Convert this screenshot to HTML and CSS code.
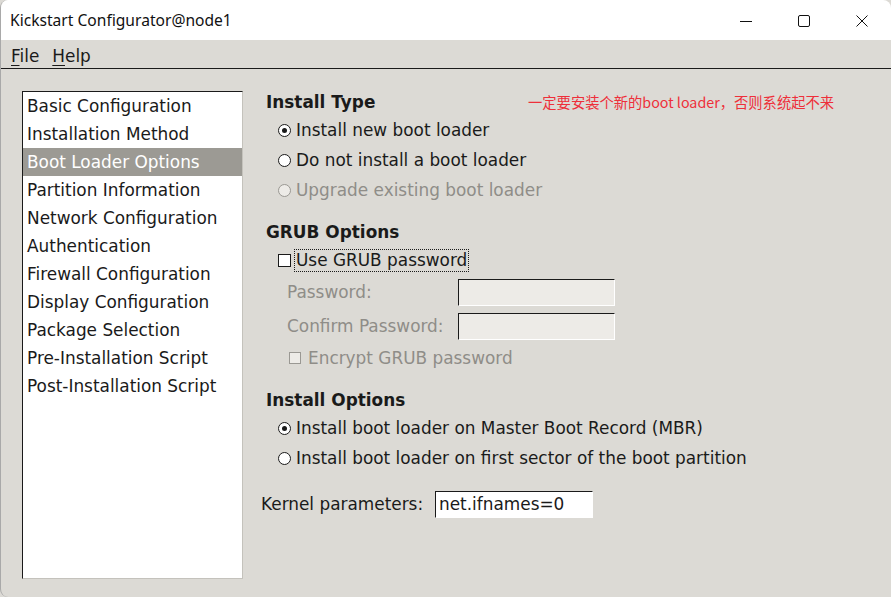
FILE: index.html
```html
<!DOCTYPE html>
<html>
<head>
<meta charset="utf-8">
<link rel="stylesheet" href="styles.css">
</head>
<body>
<div class="window">
  <div class="titlebar">
    <span class="title">Kickstart Configurator@node1</span>
    <div class="controls">
      <svg class="ctl" width="14" height="14" viewBox="0 0 14 14"><path d="M1 7.5H13" stroke="#111" stroke-width="1"/></svg>
      <svg class="ctl" width="14" height="14" viewBox="0 0 14 14"><rect x="1.5" y="1.5" width="11" height="11" rx="1.5" fill="none" stroke="#111" stroke-width="1"/></svg>
      <svg class="ctl" width="14" height="14" viewBox="0 0 14 14"><path d="M1.5 1.5L12.5 12.5M12.5 1.5L1.5 12.5" stroke="#111" stroke-width="1"/></svg>
    </div>
  </div>
  <div class="menubar">
    <span class="menu"><u>F</u>ile</span>
    <span class="menu"><u>H</u>elp</span>
  </div>
  <div class="body">
    <div class="list">
      <div class="item">Basic Configuration</div>
      <div class="item">Installation Method</div>
      <div class="item selected">Boot Loader Options</div>
      <div class="item">Partition Information</div>
      <div class="item">Network Configuration</div>
      <div class="item">Authentication</div>
      <div class="item">Firewall Configuration</div>
      <div class="item">Display Configuration</div>
      <div class="item">Package Selection</div>
      <div class="item">Pre-Installation Script</div>
      <div class="item">Post-Installation Script</div>
    </div>
    <div class="panel">
      <div class="heading first">Install Type <span class="note">一定要安装个新的boot loader，否则系统起不来</span></div>
      <div class="row opt"><span class="radio checked"></span>Install new boot loader</div>
      <div class="row opt"><span class="radio"></span>Do not install a boot loader</div>
      <div class="row opt disabled"><span class="radio dis"></span>Upgrade existing boot loader</div>

      <div class="heading grub">GRUB Options</div>
      <div class="row check"><span class="box"></span><span class="focus">Use GRUB password</span></div>
      <div class="row field disabled"><span class="flabel">Password:</span><span class="entry dis"></span></div>
      <div class="row field disabled"><span class="flabel">Confirm Password:</span><span class="entry dis"></span></div>
      <div class="row encrypt disabled"><span class="box small dis"></span>Encrypt GRUB password</div>

      <div class="heading opts">Install Options</div>
      <div class="row opt"><span class="radio checked"></span>Install boot loader on Master Boot Record (MBR)</div>
      <div class="row opt"><span class="radio"></span>Install boot loader on first sector of the boot partition</div>

      <div class="row kernel"><span class="klabel">Kernel parameters:</span><span class="entry kentry">net.ifnames=0</span></div>
    </div>
  </div>
</div>
</body>
</html>
```

FILE: styles.css
```css
html, body {
  margin: 0;
  padding: 0;
  background: #dcdad5;
}
.window {
  width: 891px;
  height: 597px;
  box-sizing: border-box;
  border-left: 1px solid #a9a9a9;
  border-radius: 8px 8px 0 8px;
  overflow: hidden;
  display: flex;
  flex-direction: column;
  background: #dcdad5;
  font-family: "DejaVu Sans", sans-serif;
  font-size: 16.9px;
  color: #1a1a1a;
}
.titlebar {
  height: 40px;
  flex: none;
  background: #ffffff;
  display: flex;
  align-items: center;
  justify-content: space-between;
}
.title {
  font-family: "Noto Sans", sans-serif;
  font-size: 15.6px;
  color: #111;
  padding-left: 9px;
  padding-bottom: 1px;
}
.controls {
  display: flex;
  align-items: center;
  gap: 44px;
  padding-right: 22px;
  padding-top: 1px;
}
.ctl { display: block; }
.menubar {
  height: 29px;
  flex: none;
  box-sizing: border-box;
  padding-top: 3px;
  border-bottom: 1px solid #1a1a1a;
  display: flex;
  align-items: center;
  gap: 13px;
  padding-left: 10px;
}
.menu { color: #1a1a1a; }
.menu u { text-decoration-thickness: 1px; text-underline-offset: 3px; }
.body {
  flex: 1;
  display: flex;
  align-items: flex-start;
  padding: 22px 0 0 21px;
}
.list {
  width: 221px;
  height: 488px;
  box-sizing: border-box;
  padding-top: 1px;
  background: #fff;
  border-top: 1px solid #1a1a1a;
  border-left: 1px solid #1a1a1a;
  border-right: 1px solid #c4c2bc;
  border-bottom: 1px solid #c4c2bc;
  box-shadow: inset -1px -1px 0 #ffffff;
  flex: none;
}
.item {
  height: 28px;
  line-height: 28px;
  padding-left: 4px;
  white-space: nowrap;
  color: #1a1a1a;
}
.item:first-child { height: 27px; line-height: 27px; }
.item.selected {
  background: #9c9a94;
  color: #ffffff;
}
.panel {
  margin-left: 23px;
  margin-top: -3px;
  display: flex;
  flex-direction: column;
  width: 600px;
}
.heading {
  height: 27px;
  display: flex;
  align-items: center;
  font-weight: bold;
  position: relative;
}
.heading.grub { margin-top: 13px; height: 28px; }
.heading.opts { margin-top: 14px; }
.note {
  position: absolute;
  left: 262px;
  top: 3px;
  font-family: "Noto Sans CJK SC", "Microsoft YaHei", sans-serif;
  font-weight: normal;
  font-size: 14.3px;
  color: #ee2f3a;
  white-space: nowrap;
}
.row {
  display: flex;
  align-items: center;
  white-space: nowrap;
}
.opt { height: 30px; padding-left: 12px; }
.disabled { color: #8f8d88; }
.radio {
  width: 11px;
  height: 11px;
  border: 1px solid #1a1a1a;
  border-radius: 50%;
  background: #fff;
  margin-right: 5px;
  display: inline-flex;
  align-items: center;
  justify-content: center;
  flex: none;
}
.radio.checked::after {
  content: "";
  width: 5px;
  height: 5px;
  border-radius: 50%;
  background: #1a1a1a;
}
.radio.dis {
  border-color: #9a9893;
  background: #edebe7;
}
.check { height: 28px; padding-left: 12px; }
.box {
  width: 11px;
  height: 11px;
  border: 1px solid #1a1a1a;
  background: #fff;
  flex: none;
  margin-right: 3px;
}
.box.small {
  width: 10px;
  height: 10px;
  margin-right: 7px;
}
.box.dis {
  border-color: #9a9893;
  background: #edebe7;
}
.focus {
  border: 1px dotted #1a1a1a;
  padding: 0 1px 1px 1px;
  line-height: 20px;
}
.field {
  height: 32px;
  margin-top: 2px;
  padding-left: 21px;
}
.flabel {
  width: 171px;
  flex: none;
}
.entry {
  box-sizing: border-box;
  width: 157px;
  height: 27px;
  border-top: 1px solid #1a1a1a;
  border-left: 1px solid #1a1a1a;
  border-right: 1px solid #ffffff;
  border-bottom: 1px solid #ffffff;
  background: #fff;
  flex: none;
}
.entry.dis { background: #edebe7; }
.encrypt {
  height: 28px;
  margin-top: 2px;
  padding-left: 23px;
}
.kernel {
  height: 32px;
  margin-top: 15px;
  margin-left: -5px;
}
.klabel {
  width: 174px;
  flex: none;
}
.kentry {
  width: 158px;
  display: flex;
  align-items: center;
  padding-left: 3px;
  color: #1a1a1a;
}
```
